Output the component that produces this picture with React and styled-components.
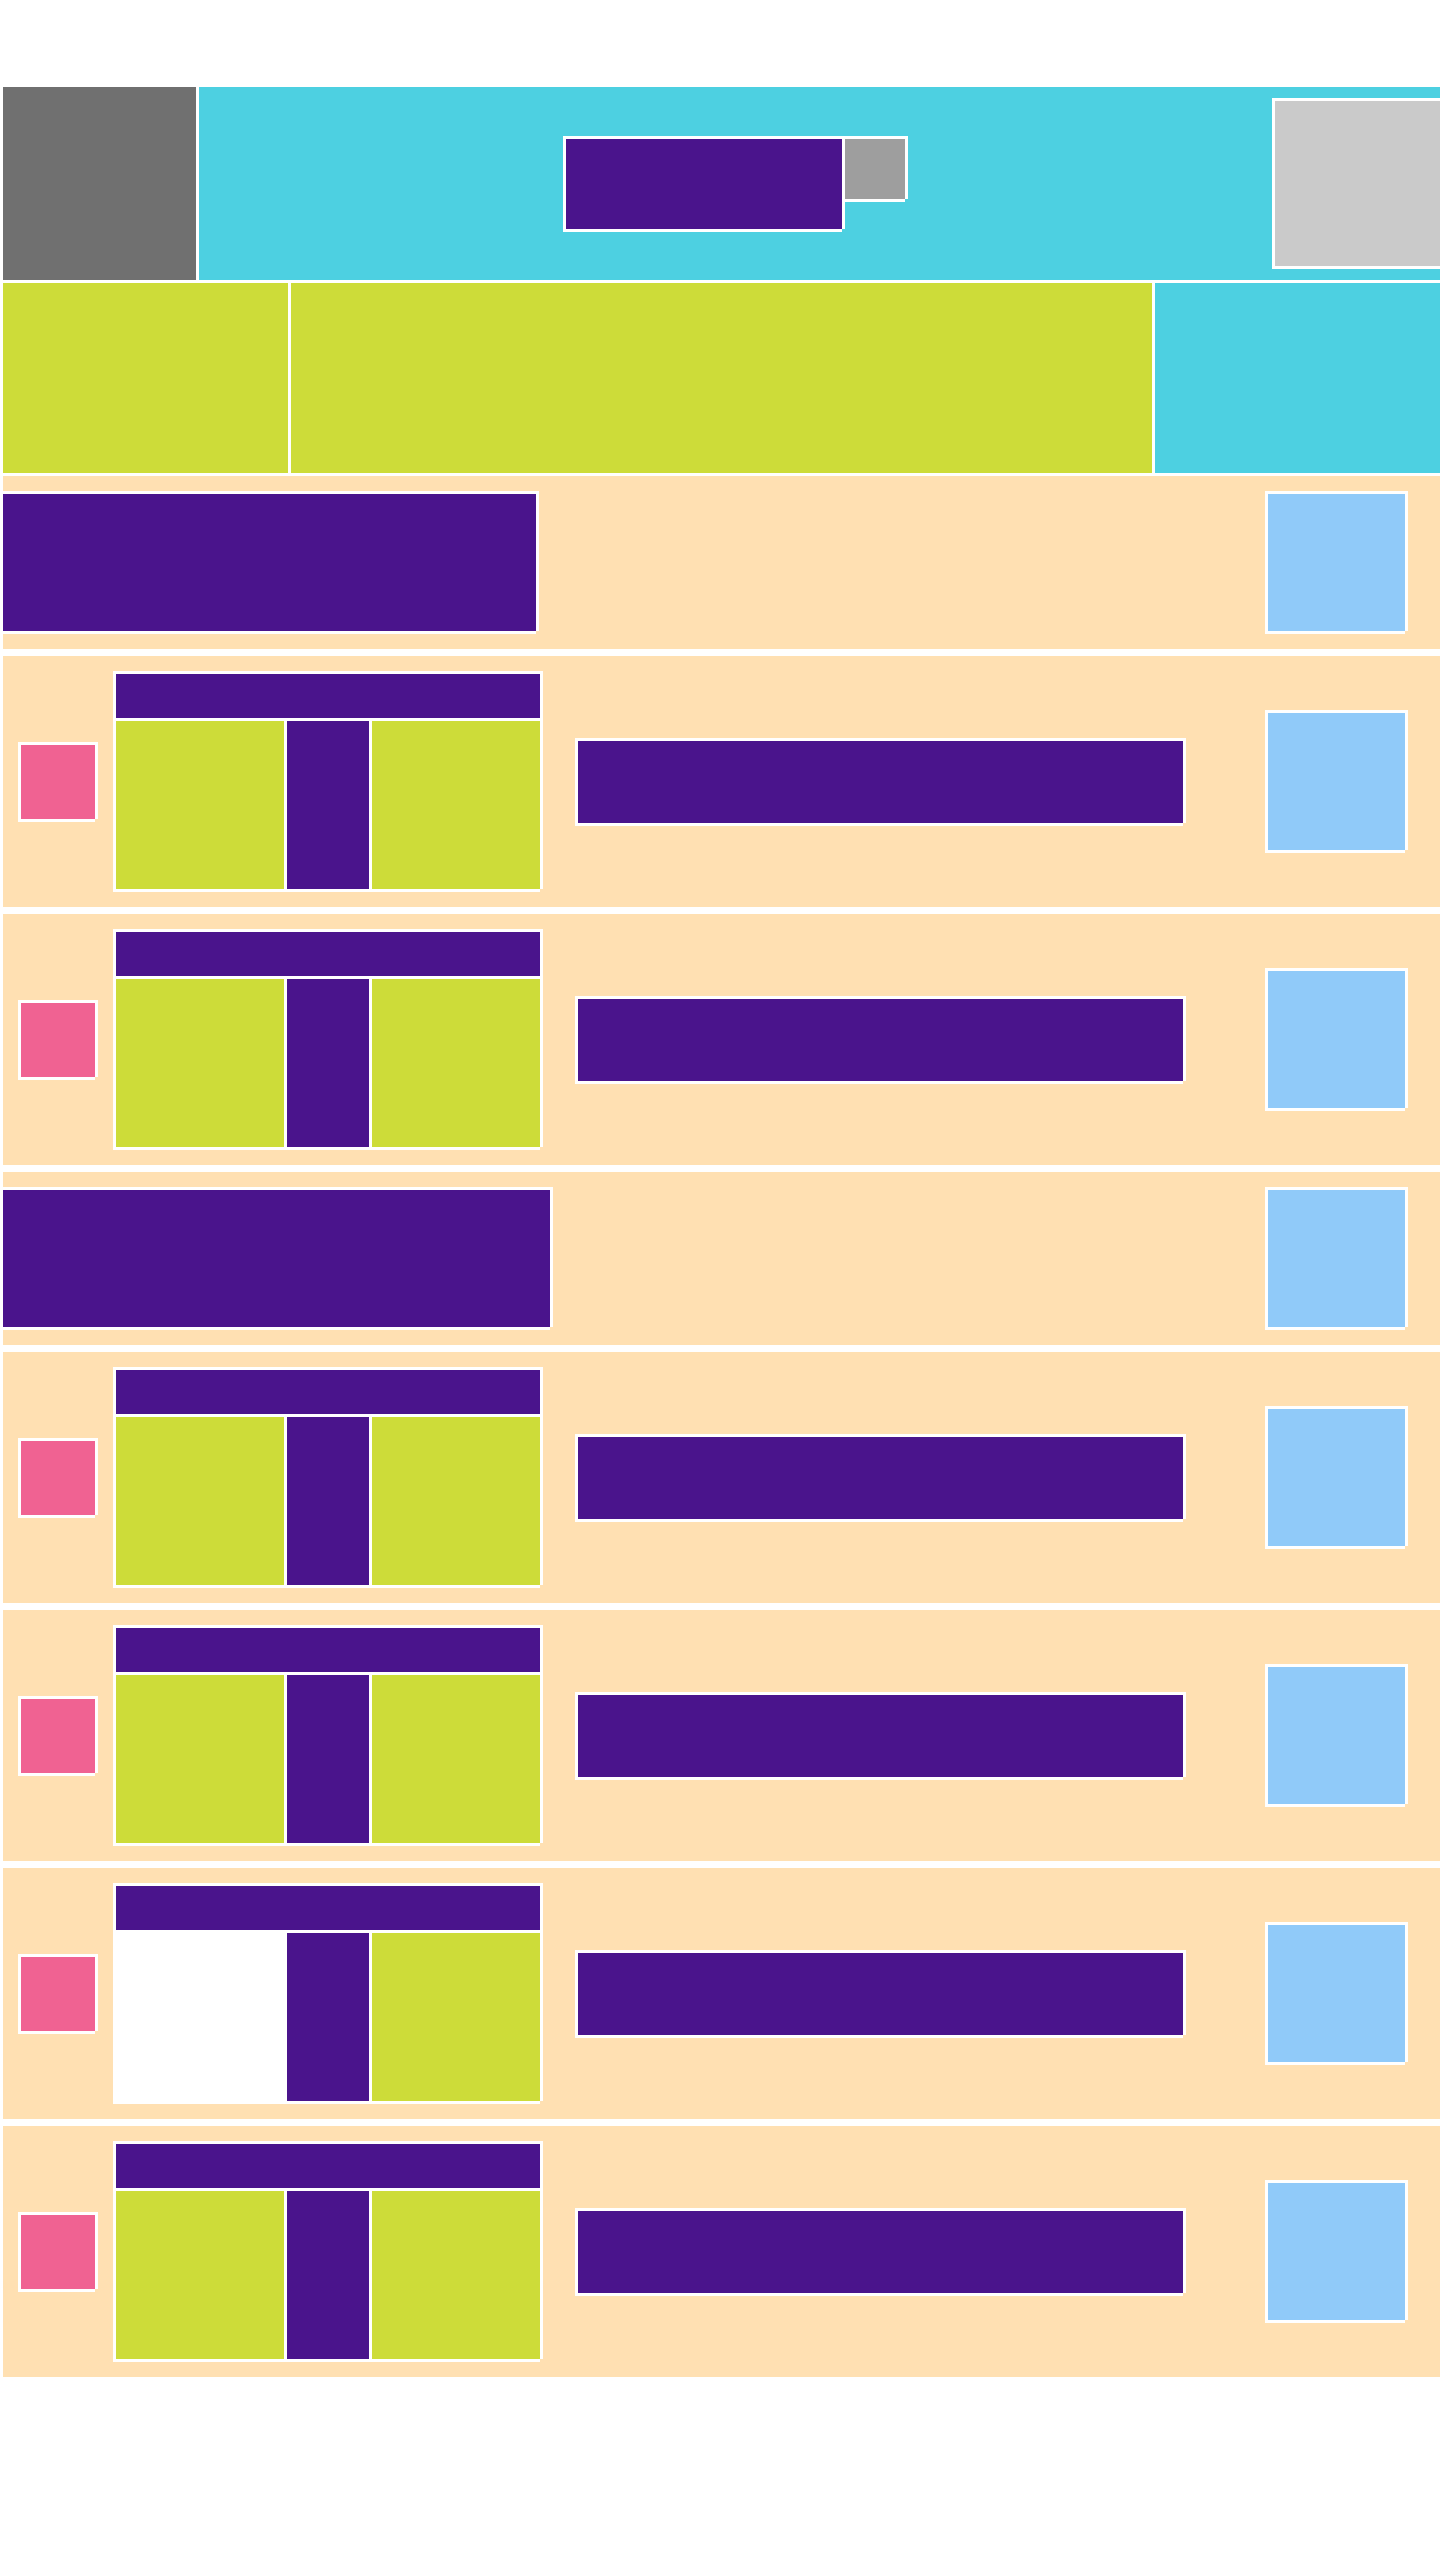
import React from "react";
import styled, { createGlobalStyle, css } from "styled-components";

const GlobalStyle = createGlobalStyle`
    html, body {
        margin: 0;
        padding: 0;
        background: #ffffff;
        font-family: "Liberation Sans", Arial, sans-serif;
    }
    body {
        overflow-x: hidden;
    }
`;

// white 3px frame, drawn the way the mockup draws it (bottom-right corner left open)
const framed = css`
    box-shadow:
        -3px -3px 0 0 #ffffff,
        3px -3px 0 0 #ffffff,
        -3px 3px 0 0 #ffffff,
        3px 0 0 0 #ffffff,
        0 3px 0 0 #ffffff;
`;

const Page = styled.div`
    width: 1437px;
    padding: 87px 0 0 3px;
    display: flex;
    flex-direction: column;
`;

const Top = styled.div`
    display: flex;
    flex-direction: column;
    gap: 3px;
    margin-bottom: 3px;
`;

const HeaderRow = styled.div`
    display: flex;
    gap: 3px;
    height: 193px;
`;

const Logo = styled.div`
    width: 193px;
    flex-shrink: 0;
    background: #707070;
`;

const HeaderBar = styled.div`
    flex: 1;
    display: flex;
    align-items: center;
    background: #4dd0e1;
    overflow: hidden;
`;

const TitleGroup = styled.div`
    display: flex;
    align-items: flex-start;
    gap: 3px;
    margin-left: 367px;
    flex-shrink: 0;
`;

const Block = styled.div`
    ${framed};
    flex-shrink: 0;
    width: ${(p) => p.w}px;
    height: ${(p) => p.h}px;
    background: ${(p) => p.color};
`;

const Avatar = styled(Block)`
    margin-left: 370px;
`;

const NavRow = styled.div`
    display: grid;
    grid-template-columns: 285px 1fr 285px;
    gap: 3px;
    height: 190px;
`;

const NavCell = styled.div`
    background: ${(p) => p.color};
`;

const List = styled.div`
    display: flex;
    flex-direction: column;
    gap: 7px;
`;

const Band = styled.div`
    display: flex;
    align-items: center;
    background: #ffe0b2;
    padding: 18px 35px 18px 0;
`;

const SectionTitle = styled(Block)``;

const Thumb = styled(Block)`
    margin-left: 18px;
`;

const Card = styled.div`
    ${framed};
    margin-left: 21px;
    width: 424px;
    display: grid;
    grid-template-columns: 168px 82px 168px;
    grid-template-rows: 44px 168px;
    gap: 3px;
    background: #ffffff;
    flex-shrink: 0;
`;

const CardHead = styled.div`
    grid-column: 1 / -1;
    background: #4a148c;
`;

const CardCell = styled.div`
    background: ${(p) => p.color};
`;

const Label = styled(Block)`
    margin-left: 38px;
`;

const Action = styled(Block)`
    margin-left: auto;
`;

const PURPLE = "#4a148c";
const LIME = "#cddc39";
const BLUE = "#90caf9";

const sections = [
    { title: 533, items: [LIME, LIME] },
    { title: 547, items: [LIME, LIME, "#ffffff", LIME] },
];

function Item({ first }) {
    return (
        <Band>
            <Thumb w={74} h={74} color="#f06292" />
            <Card>
                <CardHead />
                <CardCell color={first} />
                <CardCell color={PURPLE} />
                <CardCell color={LIME} />
            </Card>
            <Label w={605} h={82} color={PURPLE} />
            <Action w={137} h={137} color={BLUE} />
        </Band>
    );
}

export default function App() {
    return (
        <>
            <GlobalStyle />
            <Page>
                <Top>
                    <HeaderRow>
                        <Logo />
                        <HeaderBar>
                            <TitleGroup>
                                <Block w={276} h={90} color={PURPLE} />
                                <Block w={60} h={60} color="#9e9e9e" />
                            </TitleGroup>
                            <Avatar w={240} h={165} color="#cacaca" />
                        </HeaderBar>
                    </HeaderRow>
                    <NavRow>
                        <NavCell color={LIME} />
                        <NavCell color={LIME} />
                        <NavCell color="#4dd0e1" />
                    </NavRow>
                </Top>
                <List>
                    {sections.map((s, i) => (
                        <React.Fragment key={i}>
                            <Band>
                                <SectionTitle w={s.title} h={137} color={PURPLE} />
                                <Action w={137} h={137} color={BLUE} />
                            </Band>
                            {s.items.map((c, j) => (
                                <Item key={j} first={c} />
                            ))}
                        </React.Fragment>
                    ))}
                </List>
            </Page>
        </>
    );
}
